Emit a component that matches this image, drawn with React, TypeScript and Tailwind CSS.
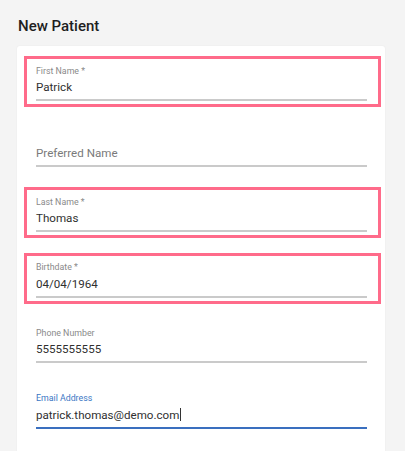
import React from "react";

type Field = {
  label: string;
  value?: string;
  placeholder?: string;
  flagged?: boolean;
  focused?: boolean;
};

const fields: Field[] = [
  { label: "First Name *", value: "Patrick", flagged: true },
  { label: "", placeholder: "Preferred Name" },
  { label: "Last Name *", value: "Thomas", flagged: true },
  { label: "Birthdate *", value: "04/04/1964", flagged: true },
  { label: "Phone Number", value: "5555555555" },
  { label: "Email Address", value: "patrick.thomas@demo.com", focused: true },
];

const FormField: React.FC<{ field: Field }> = ({ field }) => {
  return (
    <div
      className={
        "h-[51px] border-[3px] pl-[9px] pr-[11px] pt-[6.5px] " +
        (field.flagged ? "border-[#ff6b8a]" : "border-transparent")
      }
    >
      {/* floating label */}
      <div
        className={
          "h-[11px] text-[8.8px] leading-[11px] " +
          (field.focused ? "text-[#3a76c4]" : "text-[#8a8a8a]")
        }
      >
        {field.label}
      </div>
      <div className="mt-[2.5px] h-[16px] text-[11.6px] leading-[16px] text-[#303030] flex items-center">
        {field.value ? (
          <>
            <span>{field.value}</span>
            {field.focused && <span className="ml-[1px] inline-block w-px h-[13px] bg-[#333]" />}
          </>
        ) : (
          <span className="text-[#7a7a7a]">{field.placeholder}</span>
        )}
      </div>
      <div
        className={
          "mt-[4px] h-[2px] " + (field.focused ? "bg-[#3a6fbf]" : "bg-[#cacaca]")
        }
      />
    </div>
  );
};

export default function App() {
  return (
    <div
      className="h-[451px] overflow-hidden bg-[#f4f4f4] pt-[16px]"
      style={{ fontFamily: "Roboto, 'Liberation Sans', sans-serif" }}
    >
      <h1 className="pl-[18px] text-[15px] leading-[20px] font-medium text-[#1e1e1e]">
        New Patient
      </h1>
      <div className="mt-[10px] ml-[17px] w-[368px] h-[500px] rounded-[3px] bg-white pl-[7px] pr-[4px] pt-[10px] shadow-[0_0_2px_rgba(0,0,0,0.06)]">
        <div className="flex flex-col gap-[14.6px]">
          {fields.map((f, i) => (
            <FormField key={i} field={f} />
          ))}
        </div>
      </div>
    </div>
  );
}
